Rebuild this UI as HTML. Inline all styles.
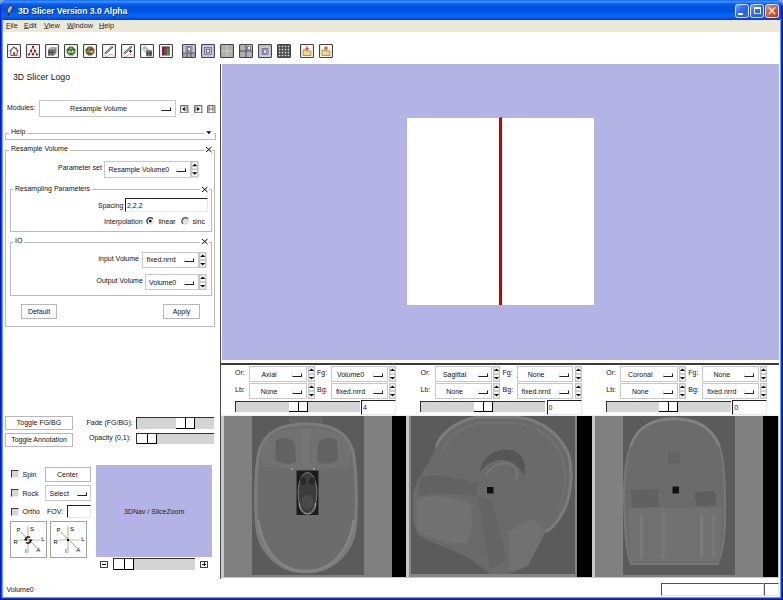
<!DOCTYPE html>
<html><head><meta charset="utf-8">
<style>
*{box-sizing:border-box;margin:0;padding:0}
html,body{width:783px;height:600px;overflow:hidden;background:#fff}
body{position:relative;font-family:"Liberation Sans",sans-serif;font-size:7px;color:#000}
.a{position:absolute}
u{text-decoration-thickness:0.9px;text-underline-offset:0.4px;text-decoration-color:#666}
.t{position:absolute;white-space:nowrap;line-height:1;color:#111}
.ind{position:absolute;width:10px;height:4px;background:#fff;border-top:1px solid #f4f4f4;border-left:1px solid #e0e0e0;border-right:1px solid #222;border-bottom:1.5px solid #222}
.tb{position:absolute;top:44px;width:14px;height:14px;border:1px solid #3a3a3a;background:#f2f2f2;border-radius:1px;overflow:hidden}
.tb svg{display:block}
</style></head><body>

<div class="a" style="left:0px;top:0px;width:6px;height:6px;background:#8aa0d8"></div>
<div class="a" style="left:777px;top:0px;width:6px;height:6px;background:#8aa0d8"></div>
<div class="a" style="left:0;top:0;width:783px;height:19.5px;border-radius:6px 6px 0 0;background:linear-gradient(#1462ec 0px,#3a90fd 1.3px,#3088fc 2.3px,#0a5cea 4px,#0053df 7px,#0052de 11px,#005cf0 13px,#0066ff 15px,#0062f8 17px,#0a48d8 18.6px,#1840b0 19.5px)"></div>
<div class="a" style="left:780px;top:5px;width:3px;height:15px;background:linear-gradient(90deg,#1050e0,#0030c0 50%,#001890)"></div>
<div class="a" style="left:0px;top:5px;width:1px;height:15px;background:#0030c8"></div>
<svg class="a" style="left:6px;top:5px" width="8" height="11" viewBox="0 0 8 11"><path d="M2.3 8.3 C0.8 7.5 0.6 4.5 2.5 2.5 C3.8 1 5.5 0.3 6.3 0.6 C6.8 2 6 5 4.5 6.8 C3.8 7.6 3 8.2 2.3 8.3 Z" fill="#c8b878" stroke="#1a1a10" stroke-width="0.7"/><path d="M2.5 8 L2.2 10.8" stroke="#101010" stroke-width="1.1"/></svg>
<div class="t" style="left:18px;top:6.8px;font-size:8.5px;font-weight:bold;color:#fff;-webkit-text-stroke:0;text-shadow:0.8px 0.8px 0 #0a2a90;transform:scaleY(1.12);transform-origin:0 100%">3D Slicer Version 3.0 Alpha</div>
<div class="a" style="left:735px;top:4px;width:14px;height:14px;border:1px solid #d8e4ff;border-radius:2.5px;background:linear-gradient(135deg,#80a8ff,#3a70f0 35%,#2a5ee8 70%,#3a6cf4)"></div>
<div class="a" style="left:750px;top:4px;width:14px;height:14px;border:1px solid #d8e4ff;border-radius:2.5px;background:linear-gradient(135deg,#80a8ff,#3a70f0 35%,#2a5ee8 70%,#3a6cf4)"></div>
<div class="a" style="left:765px;top:4px;width:14px;height:14px;border:1px solid #d8e4ff;border-radius:2.5px;background:linear-gradient(135deg,#f09070,#e06038 40%,#d04818 75%,#c03a10)"></div>
<div class="a" style="left:738px;top:13px;width:5px;height:1.6px;background:#fff"></div>
<div class="a" style="left:753.5px;top:7.4px;width:7px;height:6.2px;border:1px solid #e8f0ff;border-top:2px solid #fff"></div>
<svg class="a" style="left:765px;top:4px" width="14" height="14"><path d="M3.8 3.3L10.2 10.2M10.2 3.3L3.8 10.2" stroke="#fff" stroke-width="1.3"/></svg>
<div class="a" style="left:0px;top:19px;width:1px;height:581px;background:#0018d0"></div>
<div class="a" style="left:1px;top:19px;width:1px;height:581px;background:#0850e0"></div>
<div class="a" style="left:2px;top:19px;width:1px;height:581px;background:#6a9af4"></div>
<div class="a" style="left:780px;top:19px;width:1px;height:581px;background:#6a9af8"></div>
<div class="a" style="left:781px;top:19px;width:1px;height:581px;background:#0838d8"></div>
<div class="a" style="left:782px;top:19px;width:1px;height:581px;background:#001a90"></div>
<div class="a" style="left:2px;top:597px;width:779px;height:1px;background:#6a9af8"></div>
<div class="a" style="left:1px;top:598px;width:781px;height:1px;background:#0838d0"></div>
<div class="a" style="left:0px;top:599px;width:783px;height:1px;background:#001a88"></div>
<div class="a" style="left:3px;top:19.5px;width:777px;height:12px;background:#ece9d8"></div>
<div class="t" style="left:6px;top:21.8px;font-size:7.3px;color:#2a2a2a"><u>F</u>ile</div>
<div class="t" style="left:24px;top:21.8px;font-size:7.3px;color:#2a2a2a"><u>E</u>dit</div>
<div class="t" style="left:44px;top:21.8px;font-size:7.3px;color:#2a2a2a"><u>V</u>iew</div>
<div class="t" style="left:67px;top:21.8px;font-size:7.3px;color:#2a2a2a"><u>W</u>indow</div>
<div class="t" style="left:99px;top:21.8px;font-size:7.3px;color:#2a2a2a"><u>H</u>elp</div>
<svg class="a" style="left:7px;top:44px" width="14" height="14" viewBox="0 0 14 14"><rect x="0.5" y="0.5" width="13" height="13" rx="0.8" fill="#fafafa"/><path d="M2.6 7.2L7 3L11.4 7.2" fill="none" stroke="#555" stroke-width="1.1"/><path d="M3.8 6.2V11.4H10.2V6.2" fill="none" stroke="#444" stroke-width="0.9"/><rect x="6.1" y="8.2" width="1.9" height="3" fill="#e03a10"/><rect x="9" y="3.6" width="1" height="2" fill="#666"/><rect x="0.55" y="0.55" width="12.9" height="12.9" rx="0.8" fill="none" stroke="#444" stroke-width="1.1"/></svg>
<svg class="a" style="left:26px;top:44px" width="14" height="14" viewBox="0 0 14 14"><rect x="0.5" y="0.5" width="13" height="13" rx="0.8" fill="#fafafa"/><path d="M7 2.8L5 6.8L3 10.6M5 6.8L7 10.6M7 2.8L9 6.8L11 10.6M9 6.8L7 10.6" fill="none" stroke="#555" stroke-width="0.8"/><ellipse cx="7" cy="2.8" rx="1.25" ry="1" fill="#8a1a0a"/><ellipse cx="5" cy="6.8" rx="1.25" ry="1" fill="#8a1a0a"/><ellipse cx="9" cy="6.8" rx="1.25" ry="1" fill="#8a1a0a"/><ellipse cx="3" cy="10.6" rx="1.25" ry="1" fill="#8a1a0a"/><ellipse cx="7" cy="10.6" rx="1.25" ry="1" fill="#8a1a0a"/><ellipse cx="11" cy="10.6" rx="1.25" ry="1" fill="#8a1a0a"/><rect x="0.55" y="0.55" width="12.9" height="12.9" rx="0.8" fill="none" stroke="#444" stroke-width="1.1"/></svg>
<svg class="a" style="left:45px;top:44px" width="14" height="14" viewBox="0 0 14 14"><rect x="0.5" y="0.5" width="13" height="13" rx="0.8" fill="#fafafa"/><path d="M3 5.5L5.5 3H11.5L9 5.5Z" fill="#a8a8a8"/><path d="M9 5.5L11.5 3V9L9 11.5Z" fill="#7a7a7a"/><rect x="3" y="5.5" width="6" height="6" fill="#3a3a3a"/><rect x="3.5" y="6.0" width="0.7" height="0.7" fill="#e8e8e8"/><rect x="3.5" y="7.5" width="0.7" height="0.7" fill="#e8e8e8"/><rect x="3.5" y="9.0" width="0.7" height="0.7" fill="#e8e8e8"/><rect x="3.5" y="10.5" width="0.7" height="0.7" fill="#e8e8e8"/><rect x="5.0" y="6.0" width="0.7" height="0.7" fill="#e8e8e8"/><rect x="5.0" y="7.5" width="0.7" height="0.7" fill="#e8e8e8"/><rect x="5.0" y="9.0" width="0.7" height="0.7" fill="#e8e8e8"/><rect x="5.0" y="10.5" width="0.7" height="0.7" fill="#e8e8e8"/><rect x="6.5" y="6.0" width="0.7" height="0.7" fill="#e8e8e8"/><rect x="6.5" y="7.5" width="0.7" height="0.7" fill="#e8e8e8"/><rect x="6.5" y="9.0" width="0.7" height="0.7" fill="#e8e8e8"/><rect x="6.5" y="10.5" width="0.7" height="0.7" fill="#e8e8e8"/><rect x="8.0" y="6.0" width="0.7" height="0.7" fill="#e8e8e8"/><rect x="8.0" y="7.5" width="0.7" height="0.7" fill="#e8e8e8"/><rect x="8.0" y="9.0" width="0.7" height="0.7" fill="#e8e8e8"/><rect x="8.0" y="10.5" width="0.7" height="0.7" fill="#e8e8e8"/><rect x="0.55" y="0.55" width="12.9" height="12.9" rx="0.8" fill="none" stroke="#444" stroke-width="1.1"/></svg>
<svg class="a" style="left:64px;top:44px" width="14" height="14" viewBox="0 0 14 14"><rect x="0.5" y="0.5" width="13" height="13" rx="0.8" fill="#fafafa"/><path d="M5.2 2.6H8.8L11.4 5.2V8.8L8.8 11.4H5.2L2.6 8.8V5.2Z" fill="#4a7a3a"/><circle cx="5.6" cy="7.8" r="1.5" fill="#a8d098"/><circle cx="8.6" cy="7.6" r="1.4" fill="#b0d8a0"/><circle cx="7" cy="4.6" r="1.2" fill="#80b070"/><circle cx="7.1" cy="6.4" r="0.7" fill="#1a2a14"/><circle cx="4.4" cy="5.6" r="0.6" fill="#1a2a14"/><circle cx="9.6" cy="5.6" r="0.6" fill="#1a2a14"/><circle cx="7" cy="9.8" r="0.7" fill="#2a4a20"/><rect x="0.55" y="0.55" width="12.9" height="12.9" rx="0.8" fill="none" stroke="#444" stroke-width="1.1"/></svg>
<svg class="a" style="left:83px;top:44px" width="14" height="14" viewBox="0 0 14 14"><rect x="0.5" y="0.5" width="13" height="13" rx="0.8" fill="#fafafa"/><path d="M5.2 2.6H8.8L11.4 5.2V8.8L8.8 11.4H5.2L2.6 8.8V5.2Z" fill="#4a7a3a"/><circle cx="5.6" cy="7.8" r="1.5" fill="#a8d098"/><circle cx="8.6" cy="7.6" r="1.4" fill="#b0d8a0"/><circle cx="7" cy="4.6" r="1.2" fill="#80b070"/><circle cx="7.1" cy="6.4" r="0.7" fill="#1a2a14"/><circle cx="4.4" cy="5.6" r="0.6" fill="#1a2a14"/><circle cx="9.6" cy="5.6" r="0.6" fill="#1a2a14"/><circle cx="7" cy="9.8" r="0.7" fill="#2a4a20"/><circle cx="8.4" cy="5" r="1.4" fill="#f01010"/><circle cx="5.4" cy="9" r="1.4" fill="#f01010"/><rect x="0.55" y="0.55" width="12.9" height="12.9" rx="0.8" fill="none" stroke="#444" stroke-width="1.1"/></svg>
<svg class="a" style="left:102px;top:44px" width="14" height="14" viewBox="0 0 14 14"><rect x="0.5" y="0.5" width="13" height="13" rx="0.8" fill="#fafafa"/><path d="M3 9.8L10.8 2.6" stroke="#505050" stroke-width="2"/><path d="M3.2 9.6L10.6 2.8" stroke="#e0e0e0" stroke-width="0.7"/><path d="M2.4 11.4C3.8 13 5.4 12.6 6.8 11.2C8 10 9.6 9.8 11.6 11.4" fill="none" stroke="#f07890" stroke-width="0.8"/><rect x="0.55" y="0.55" width="12.9" height="12.9" rx="0.8" fill="none" stroke="#444" stroke-width="1.1"/></svg>
<svg class="a" style="left:121px;top:44px" width="14" height="14" viewBox="0 0 14 14"><rect x="0.5" y="0.5" width="13" height="13" rx="0.8" fill="#fafafa"/><path d="M3 9.8L10.8 2.6" stroke="#505050" stroke-width="2"/><path d="M3.2 9.6L10.6 2.8" stroke="#e0e0e0" stroke-width="0.7"/><path d="M2.4 11.4C3.8 13 5.4 12.6 6.8 11.2C8 10 9.6 9.8 11.6 11.4" fill="none" stroke="#f07890" stroke-width="0.8"/><path d="M9.6 5.8V8.8M8.1 7.3H11.1" stroke="#222" stroke-width="1"/><rect x="0.55" y="0.55" width="12.9" height="12.9" rx="0.8" fill="none" stroke="#444" stroke-width="1.1"/></svg>
<svg class="a" style="left:140px;top:44px" width="14" height="14" viewBox="0 0 14 14"><rect x="0.5" y="0.5" width="13" height="13" rx="0.8" fill="#fafafa"/><path d="M2.2 4.6L4.8 2L11 8.2L8.4 10.8Z" fill="#e4e4e4" stroke="#606060" stroke-width="0.5"/><rect x="4.4" y="4.2" width="0.6" height="0.6" fill="#555"/><rect x="4.4" y="2.9000000000000004" width="0.6" height="0.6" fill="#555"/><rect x="5.7" y="5.5" width="0.6" height="0.6" fill="#555"/><rect x="5.7" y="4.2" width="0.6" height="0.6" fill="#555"/><rect x="7.0" y="6.800000000000001" width="0.6" height="0.6" fill="#555"/><rect x="7.0" y="5.500000000000001" width="0.6" height="0.6" fill="#555"/><rect x="8.3" y="8.100000000000001" width="0.6" height="0.6" fill="#555"/><rect x="8.3" y="6.800000000000002" width="0.6" height="0.6" fill="#555"/><rect x="6.2" y="6.6" width="5.8" height="5.6" fill="#2a2a2a"/><rect x="6.7" y="7.1" width="0.7" height="0.7" fill="#f0f0f0"/><rect x="6.7" y="8.5" width="0.7" height="0.7" fill="#f0f0f0"/><rect x="6.7" y="9.899999999999999" width="0.7" height="0.7" fill="#f0f0f0"/><rect x="6.7" y="11.299999999999999" width="0.7" height="0.7" fill="#f0f0f0"/><rect x="8.1" y="7.1" width="0.7" height="0.7" fill="#f0f0f0"/><rect x="8.1" y="8.5" width="0.7" height="0.7" fill="#f0f0f0"/><rect x="8.1" y="9.899999999999999" width="0.7" height="0.7" fill="#f0f0f0"/><rect x="8.1" y="11.299999999999999" width="0.7" height="0.7" fill="#f0f0f0"/><rect x="9.5" y="7.1" width="0.7" height="0.7" fill="#f0f0f0"/><rect x="9.5" y="8.5" width="0.7" height="0.7" fill="#f0f0f0"/><rect x="9.5" y="9.899999999999999" width="0.7" height="0.7" fill="#f0f0f0"/><rect x="9.5" y="11.299999999999999" width="0.7" height="0.7" fill="#f0f0f0"/><rect x="10.899999999999999" y="7.1" width="0.7" height="0.7" fill="#f0f0f0"/><rect x="10.899999999999999" y="8.5" width="0.7" height="0.7" fill="#f0f0f0"/><rect x="10.899999999999999" y="9.899999999999999" width="0.7" height="0.7" fill="#f0f0f0"/><rect x="10.899999999999999" y="11.299999999999999" width="0.7" height="0.7" fill="#f0f0f0"/><rect x="0.55" y="0.55" width="12.9" height="12.9" rx="0.8" fill="none" stroke="#444" stroke-width="1.1"/></svg>
<svg class="a" style="left:159px;top:44px" width="14" height="14" viewBox="0 0 14 14"><rect x="0.5" y="0.5" width="13" height="13" rx="0.8" fill="#fafafa"/><rect x="3" y="2.6" width="8" height="8.8" fill="#2a2a2a"/><rect x="3.3" y="2.8" width="1.2" height="8.4" fill="#b81828"/><rect x="4.85" y="2.8" width="1.2" height="8.4" fill="#8a2aa0"/><rect x="6.4" y="2.8" width="1.2" height="8.4" fill="#28a848"/><rect x="7.95" y="2.8" width="1.2" height="8.4" fill="#28a0a8"/><rect x="9.5" y="2.8" width="1.2" height="8.4" fill="#a8a828"/><rect x="3.3" y="2.8" width="7.6" height="1.6" fill="#c01010" opacity="0.6"/><rect x="0.55" y="0.55" width="12.9" height="12.9" rx="0.8" fill="none" stroke="#444" stroke-width="1.1"/></svg>
<svg class="a" style="left:182px;top:44px" width="14" height="14" viewBox="0 0 14 14"><rect x="0.5" y="0.5" width="13" height="13" rx="0.8" fill="#fafafa"/><rect x="1" y="1" width="12" height="8" fill="#c8c8f0"/><rect x="4" y="2.5" width="6" height="5.5" fill="#b8b8e0" stroke="#555" stroke-width="0.6"/><rect x="5.5" y="3.8" width="3" height="3" fill="#fff" stroke="#444" stroke-width="0.6"/><rect x="1" y="9" width="12" height="4" fill="#a8a8a8"/><path d="M1 9H13M5 9V13M9 9V13" stroke="#333" stroke-width="0.7"/><rect x="0.55" y="0.55" width="12.9" height="12.9" rx="0.8" fill="none" stroke="#444" stroke-width="1.1"/></svg>
<svg class="a" style="left:201px;top:44px" width="14" height="14" viewBox="0 0 14 14"><rect x="0.5" y="0.5" width="13" height="13" rx="0.8" fill="#fafafa"/><rect x="1" y="1" width="12" height="12" fill="#c8c8f0"/><rect x="3.5" y="3.5" width="7" height="7" fill="#b8b8e0" stroke="#555" stroke-width="0.6"/><rect x="5.3" y="5.3" width="3.4" height="3.4" fill="#fff" stroke="#444" stroke-width="0.6"/><rect x="0.55" y="0.55" width="12.9" height="12.9" rx="0.8" fill="none" stroke="#444" stroke-width="1.1"/></svg>
<svg class="a" style="left:220px;top:44px" width="14" height="14" viewBox="0 0 14 14"><rect x="0.5" y="0.5" width="13" height="13" rx="0.8" fill="#fafafa"/><rect x="1" y="1" width="12" height="12" fill="#b0b0b0"/><path d="M7 1V13M1 7H13" stroke="#d8d8c8" stroke-width="0.8"/><rect x="0.55" y="0.55" width="12.9" height="12.9" rx="0.8" fill="none" stroke="#444" stroke-width="1.1"/></svg>
<svg class="a" style="left:239px;top:44px" width="14" height="14" viewBox="0 0 14 14"><rect x="0.5" y="0.5" width="13" height="13" rx="0.8" fill="#fafafa"/><rect x="1" y="1" width="12" height="12" fill="#b0b0b0"/><rect x="7" y="1" width="6" height="6" fill="#c8c8f0"/><rect x="8.3" y="2.3" width="3.4" height="3.4" fill="#fff" stroke="#444" stroke-width="0.6"/><path d="M7 1V13M1 7H13" stroke="#333" stroke-width="0.8"/><rect x="0.55" y="0.55" width="12.9" height="12.9" rx="0.8" fill="none" stroke="#444" stroke-width="1.1"/></svg>
<svg class="a" style="left:258px;top:44px" width="14" height="14" viewBox="0 0 14 14"><rect x="0.5" y="0.5" width="13" height="13" rx="0.8" fill="#fafafa"/><rect x="1" y="1" width="12" height="12" fill="#c8c8f0"/><rect x="1" y="1" width="12" height="2" fill="#c0c0b0"/><rect x="4" y="4.5" width="6" height="6" fill="#b8b8e0" stroke="#555" stroke-width="0.6"/><rect x="5.5" y="6" width="3" height="3" fill="#fff" stroke="#444" stroke-width="0.6"/><rect x="0.55" y="0.55" width="12.9" height="12.9" rx="0.8" fill="none" stroke="#444" stroke-width="1.1"/></svg>
<svg class="a" style="left:277px;top:44px" width="14" height="14" viewBox="0 0 14 14"><rect x="0.5" y="0.5" width="13" height="13" rx="0.8" fill="#fafafa"/><rect x="1" y="1" width="12" height="12" fill="#333"/><rect x="1.6" y="1.6" width="1.8" height="1.8" fill="#ddd"/><rect x="1.6" y="4.6" width="1.8" height="1.8" fill="#ddd"/><rect x="1.6" y="7.6" width="1.8" height="1.8" fill="#ddd"/><rect x="1.6" y="10.6" width="1.8" height="1.8" fill="#ddd"/><rect x="4.6" y="1.6" width="1.8" height="1.8" fill="#ddd"/><rect x="4.6" y="4.6" width="1.8" height="1.8" fill="#ddd"/><rect x="4.6" y="7.6" width="1.8" height="1.8" fill="#ddd"/><rect x="4.6" y="10.6" width="1.8" height="1.8" fill="#ddd"/><rect x="7.6" y="1.6" width="1.8" height="1.8" fill="#ddd"/><rect x="7.6" y="4.6" width="1.8" height="1.8" fill="#ddd"/><rect x="7.6" y="7.6" width="1.8" height="1.8" fill="#ddd"/><rect x="7.6" y="10.6" width="1.8" height="1.8" fill="#ddd"/><rect x="10.6" y="1.6" width="1.8" height="1.8" fill="#ddd"/><rect x="10.6" y="4.6" width="1.8" height="1.8" fill="#ddd"/><rect x="10.6" y="7.6" width="1.8" height="1.8" fill="#ddd"/><rect x="10.6" y="10.6" width="1.8" height="1.8" fill="#ddd"/><rect x="0.55" y="0.55" width="12.9" height="12.9" rx="0.8" fill="none" stroke="#444" stroke-width="1.1"/></svg>
<svg class="a" style="left:300px;top:44px" width="14" height="14" viewBox="0 0 14 14"><rect x="0.5" y="0.5" width="13" height="13" rx="0.8" fill="#fafafa"/><path d="M3 6H6L7 7H11V11.5H3Z" fill="#f0d890" stroke="#806020" stroke-width="0.6"/><path d="M7 2V6M5.3 4.3L7 6L8.7 4.3" stroke="#f06010" stroke-width="1.3" fill="none"/><rect x="0.55" y="0.55" width="12.9" height="12.9" rx="0.8" fill="none" stroke="#444" stroke-width="1.1"/></svg>
<svg class="a" style="left:319px;top:44px" width="14" height="14" viewBox="0 0 14 14"><rect x="0.5" y="0.5" width="13" height="13" rx="0.8" fill="#fafafa"/><path d="M3 6H6L7 7H11V11.5H3Z" fill="#f0d890" stroke="#806020" stroke-width="0.6"/><path d="M7 7V2.8M5.3 4.5L7 2.8L8.7 4.5" stroke="#f06010" stroke-width="1.3" fill="none"/><rect x="0.55" y="0.55" width="12.9" height="12.9" rx="0.8" fill="none" stroke="#444" stroke-width="1.1"/></svg>
<div class="a" style="left:220px;top:64px;width:1px;height:515px;background:#484848"></div>
<div class="a" style="left:222px;top:64px;width:557px;height:296px;background:#b3b3e6"></div>
<div class="a" style="left:221px;top:363px;width:558px;height:1.5px;background:#3c3c3c"></div>
<div class="a" style="left:407px;top:118px;width:187px;height:187px;background:#fff"></div>
<div class="a" style="left:499px;top:118px;width:3px;height:187px;background:linear-gradient(90deg,#8a1010,#d40000 35%,#d40000 65%,#8a1010)"></div>
<div class="a" style="left:499.5px;top:117px;width:2px;height:1px;background:#405070"></div>
<div class="a" style="left:221px;top:415px;width:558px;height:163px;background:#c8c8c8;border-top:1px solid #f0f0f0"></div>
<div class="a" style="left:224px;top:416px;width:168px;height:161px;background:#808080"></div>
<svg class="a" style="left:252px;top:416px" width="112" height="159" viewBox="252 416 112 159">
<rect x="252" y="416" width="112" height="159" fill="#5b5b5b"/>
<path d="M290 416 L322 416 L324 430 L288 430 Z" fill="#646464"/>
<path d="M306 424 C280 424 264 432 259 452 C255 472 255 510 257 528 C259 548 276 572 306 572 C336 572 353 548 355 528 C357 510 357 472 353 452 C348 432 332 424 306 424 Z" fill="#6c6c6c" stroke="#7c7c7c" stroke-width="3.2"/>
<path d="M262 446 C270 432 286 428 306 428 C326 428 342 432 350 446 L350 466 C330 470 282 470 262 466 Z" fill="#717171"/>
<path d="M276 440 C282 436 292 438 295 444 L296 462 C290 465 280 464 275 460 Z" fill="#626262"/>
<path d="M337 440 C331 436 321 438 318 444 L317 462 C323 465 333 464 338 460 Z" fill="#626262"/>
<path d="M302 428 L311 428 L310 466 L303 466 Z" fill="#767676"/>
<rect x="291" y="468" width="2" height="2" fill="#999"/><rect x="313" y="468" width="2" height="2" fill="#9a9a9a"/>
<path d="M258 520 C262 548 278 571 306 571 C334 571 350 548 354 520" fill="none" stroke="#858585" stroke-width="2.6"/>
<rect x="296.5" y="470.5" width="22" height="44.5" fill="#1c1c1c"/>
<ellipse cx="307.5" cy="493" rx="9.5" ry="20.5" fill="#3c3c3c" stroke="#8a8a8a" stroke-width="0.8"/>
<path d="M299 503 C300 512 304 514 307.5 514 C311 514 315 512 316 503" fill="none" stroke="#b0b0b0" stroke-width="0.9"/>
<ellipse cx="303" cy="481" rx="3" ry="4" fill="#2a2a2a"/><ellipse cx="312" cy="481" rx="3" ry="4" fill="#2a2a2a"/>
<ellipse cx="307.5" cy="502" rx="6" ry="7" fill="#4a4a4a"/>
</svg>
<div class="a" style="left:392px;top:416px;width:14px;height:161px;background:#000"></div>
<div class="a" style="left:408.5px;top:416px;width:168.5px;height:161px;background:#858585"></div>
<svg class="a" style="left:411px;top:416px" width="164" height="158" viewBox="411 416 164 158">
<rect x="411" y="416" width="164" height="158" fill="#5b5b5b"/>
<path d="M436 447 C440 436 452 422 477 417 L517 417 C540 420 558 432 568 453 C573 470 572 495 563 512 C556 524 550 530 546 531 C541 540 538 547 536 550 C531 560 526 566 522 569 L509 574 L490 574 C480 566 470 558 463 555 C448 548 430 542 420 536 C414 530 413 522 413 517 L413 496 C414 488 417 480 420 477 C423 470 426 466 428 464 Z" fill="#6a6a6a"/>
<path d="M436 447 C440 436 452 422 477 417 L517 417 C540 420 558 432 568 453 C573 470 572 495 563 512 C556 524 550 530 546 531" fill="none" stroke="#7c7c7c" stroke-width="3"/>
<path d="M442 452 C447 440 458 428 479 423 L516 423 C537 426 553 437 562 456 C567 472 566 494 558 510" fill="none" stroke="#737373" stroke-width="1.4"/>
<path d="M480 472 C482 456 496 448 510 450 C522 452 527 462 524 476 C520 466 510 458 498 460 C490 462 484 466 480 472 Z" fill="#565656"/><path d="M486 476 C490 466 500 462 510 464 C516 466 518 472 516 480" fill="none" stroke="#7a7a7a" stroke-width="1.5"/>
<path d="M420 478 C435 474 455 476 478 484 L476 496 C455 494 435 492 418 496 Z" fill="#626262"/>
<path d="M416 500 C428 494 456 496 470 504 C474 518 472 536 466 544 C448 544 428 538 417 530 Z" fill="#717171"/>
<path d="M478 496 L492 500 L506 560 L490 570 Z" fill="#646464"/>
<path d="M508 532 L532 518 L546 531 L528 566 L510 571 Z" fill="#717171"/>
<rect x="487" y="487" width="6.5" height="6.5" fill="#111"/>
</svg>
<div class="a" style="left:577px;top:416px;width:15px;height:161px;background:#000"></div>
<div class="a" style="left:595px;top:416px;width:168px;height:161px;background:#808080"></div>
<svg class="a" style="left:623px;top:416px" width="112" height="159" viewBox="623 416 112 159">
<rect x="623" y="416" width="112" height="159" fill="#5b5b5b"/>
<path d="M674 418 C652 418 637 428 631 444 C626 458 624 475 624 500 L625 525 C626 545 628 556 631 564 L718 564 C721 556 724 545 725 525 L725 500 C725 475 724 458 719 444 C712 428 697 418 674 418 Z" fill="#6b6b6b" stroke="#777" stroke-width="2"/>
<path d="M631 446 C636 428 652 419 674 419 C697 419 712 428 719 446" fill="none" stroke="#828282" stroke-width="2.5"/>
<path d="M628 508 L722 508 L720 562 L631 562 Z" fill="#717171"/>
<rect x="640" y="515" width="3" height="44" fill="#7a7a7a"/><rect x="662" y="512" width="3" height="46" fill="#777"/><rect x="700" y="514" width="3" height="44" fill="#7b7b7b"/><rect x="712" y="516" width="2.5" height="40" fill="#787878"/>
<path d="M631 490 L658 489 L659 507 L632 508 Z" fill="#616161"/>
<path d="M695 492 L715 491 L716 505 L696 506 Z" fill="#5e5e5e"/>
<rect x="668" y="452" width="12" height="11" fill="#646464"/>
<rect x="672.5" y="486.5" width="6.5" height="7" fill="#111"/>
</svg>
<div class="a" style="left:763px;top:416px;width:15px;height:161px;background:#000"></div>
<div class="t" style="left:235px;top:369px;font-size:7px;">Or:</div>
<div class="a" style="left:249px;top:366px;width:57.5px;height:16px;border:1.4px solid #c8c8c8;background:#fff"></div>
<div class="ind" style="left:292px;top:372.8px"></div>
<div class="t" style="left:249px;top:371px;width:40px;text-align:center;font-size:7px;">Axial</div>
<svg class="a" style="left:307.5px;top:366px" width="7" height="16" viewBox="0 0 7 16"><rect x="0.7" y="0.7" width="5.6" height="14.6" fill="#fff" stroke="#c4c4c4" stroke-width="1.4"/><rect x="0" y="7.2" width="7" height="1.6" fill="#c4c4c4"/><path d="M0.8999999999999999 5.0L6.1 5.0L3.5 2.4000000000000004Z" fill="#000"/><path d="M0.8999999999999999 11.0L6.1 11.0L3.5 13.6Z" fill="#000"/></svg>
<div class="t" style="left:235px;top:386px;font-size:7px;">Lb:</div>
<div class="a" style="left:249px;top:383px;width:57.5px;height:16px;border:1.4px solid #c8c8c8;background:#fff"></div>
<div class="ind" style="left:292px;top:389.8px"></div>
<div class="t" style="left:249px;top:388px;width:40px;text-align:center;font-size:7px;">None</div>
<svg class="a" style="left:307.5px;top:383px" width="7" height="16" viewBox="0 0 7 16"><rect x="0.7" y="0.7" width="5.6" height="14.6" fill="#fff" stroke="#c4c4c4" stroke-width="1.4"/><rect x="0" y="7.2" width="7" height="1.6" fill="#c4c4c4"/><path d="M0.8999999999999999 5.0L6.1 5.0L3.5 2.4000000000000004Z" fill="#000"/><path d="M0.8999999999999999 11.0L6.1 11.0L3.5 13.6Z" fill="#000"/></svg>
<div class="t" style="left:317px;top:369px;font-size:7px;">Fg:</div>
<div class="a" style="left:331px;top:366px;width:56.5px;height:16px;border:1.4px solid #c8c8c8;background:#fff"></div>
<div class="ind" style="left:373px;top:372.8px"></div>
<div class="t" style="left:331px;top:371px;width:39px;text-align:center;font-size:7px;">Volume0</div>
<svg class="a" style="left:389px;top:366px" width="7" height="16" viewBox="0 0 7 16"><rect x="0.7" y="0.7" width="5.6" height="14.6" fill="#fff" stroke="#c4c4c4" stroke-width="1.4"/><rect x="0" y="7.2" width="7" height="1.6" fill="#c4c4c4"/><path d="M0.8999999999999999 5.0L6.1 5.0L3.5 2.4000000000000004Z" fill="#000"/><path d="M0.8999999999999999 11.0L6.1 11.0L3.5 13.6Z" fill="#000"/></svg>
<div class="t" style="left:317px;top:386px;font-size:7px;">Bg:</div>
<div class="a" style="left:331px;top:383px;width:56.5px;height:16px;border:1.4px solid #c8c8c8;background:#fff"></div>
<div class="ind" style="left:373px;top:389.8px"></div>
<div class="t" style="left:331px;top:388px;width:39px;text-align:center;font-size:7px;">fixed.nrrd</div>
<svg class="a" style="left:389px;top:383px" width="7" height="16" viewBox="0 0 7 16"><rect x="0.7" y="0.7" width="5.6" height="14.6" fill="#fff" stroke="#c4c4c4" stroke-width="1.4"/><rect x="0" y="7.2" width="7" height="1.6" fill="#c4c4c4"/><path d="M0.8999999999999999 5.0L6.1 5.0L3.5 2.4000000000000004Z" fill="#000"/><path d="M0.8999999999999999 11.0L6.1 11.0L3.5 13.6Z" fill="#000"/></svg>
<div class="a" style="left:234.5px;top:401px;width:125px;height:11px;background:#d4d4d4;border-top:1px solid #303030;border-left:1px solid #303030"></div>
<div class="a" style="left:289px;top:402px;width:19px;height:10px;background:#fff;border-right:1px solid #000;border-bottom:1px solid #000"></div>
<div class="a" style="left:298px;top:402px;width:1px;height:9px;background:#000"></div>
<div class="a" style="left:361px;top:400px;width:35px;height:15px;background:#fff;border-top:1px solid #202020;border-left:1px solid #202020;border-right:1px solid #e8e8e8;border-bottom:1px solid #e8e8e8"></div>
<div class="t" style="left:363px;top:404px;font-size:7px;">4</div>
<div class="t" style="left:420.6px;top:369px;font-size:7px;">Or:</div>
<div class="a" style="left:434.6px;top:366px;width:57.5px;height:16px;border:1.4px solid #c8c8c8;background:#fff"></div>
<div class="ind" style="left:477.6px;top:372.8px"></div>
<div class="t" style="left:434.6px;top:371px;width:40.0px;text-align:center;font-size:7px;">Sagittal</div>
<svg class="a" style="left:493.1px;top:366px" width="7" height="16" viewBox="0 0 7 16"><rect x="0.7" y="0.7" width="5.6" height="14.6" fill="#fff" stroke="#c4c4c4" stroke-width="1.4"/><rect x="0" y="7.2" width="7" height="1.6" fill="#c4c4c4"/><path d="M0.8999999999999999 5.0L6.1 5.0L3.5 2.4000000000000004Z" fill="#000"/><path d="M0.8999999999999999 11.0L6.1 11.0L3.5 13.6Z" fill="#000"/></svg>
<div class="t" style="left:420.6px;top:386px;font-size:7px;">Lb:</div>
<div class="a" style="left:434.6px;top:383px;width:57.5px;height:16px;border:1.4px solid #c8c8c8;background:#fff"></div>
<div class="ind" style="left:477.6px;top:389.8px"></div>
<div class="t" style="left:434.6px;top:388px;width:40.0px;text-align:center;font-size:7px;">None</div>
<svg class="a" style="left:493.1px;top:383px" width="7" height="16" viewBox="0 0 7 16"><rect x="0.7" y="0.7" width="5.6" height="14.6" fill="#fff" stroke="#c4c4c4" stroke-width="1.4"/><rect x="0" y="7.2" width="7" height="1.6" fill="#c4c4c4"/><path d="M0.8999999999999999 5.0L6.1 5.0L3.5 2.4000000000000004Z" fill="#000"/><path d="M0.8999999999999999 11.0L6.1 11.0L3.5 13.6Z" fill="#000"/></svg>
<div class="t" style="left:502.6px;top:369px;font-size:7px;">Fg:</div>
<div class="a" style="left:516.6px;top:366px;width:56.5px;height:16px;border:1.4px solid #c8c8c8;background:#fff"></div>
<div class="ind" style="left:558.6px;top:372.8px"></div>
<div class="t" style="left:516.6px;top:371px;width:39.0px;text-align:center;font-size:7px;">None</div>
<svg class="a" style="left:574.6px;top:366px" width="7" height="16" viewBox="0 0 7 16"><rect x="0.7" y="0.7" width="5.6" height="14.6" fill="#fff" stroke="#c4c4c4" stroke-width="1.4"/><rect x="0" y="7.2" width="7" height="1.6" fill="#c4c4c4"/><path d="M0.8999999999999999 5.0L6.1 5.0L3.5 2.4000000000000004Z" fill="#000"/><path d="M0.8999999999999999 11.0L6.1 11.0L3.5 13.6Z" fill="#000"/></svg>
<div class="t" style="left:502.6px;top:386px;font-size:7px;">Bg:</div>
<div class="a" style="left:516.6px;top:383px;width:56.5px;height:16px;border:1.4px solid #c8c8c8;background:#fff"></div>
<div class="ind" style="left:558.6px;top:389.8px"></div>
<div class="t" style="left:516.6px;top:388px;width:39.0px;text-align:center;font-size:7px;">fixed.nrrd</div>
<svg class="a" style="left:574.6px;top:383px" width="7" height="16" viewBox="0 0 7 16"><rect x="0.7" y="0.7" width="5.6" height="14.6" fill="#fff" stroke="#c4c4c4" stroke-width="1.4"/><rect x="0" y="7.2" width="7" height="1.6" fill="#c4c4c4"/><path d="M0.8999999999999999 5.0L6.1 5.0L3.5 2.4000000000000004Z" fill="#000"/><path d="M0.8999999999999999 11.0L6.1 11.0L3.5 13.6Z" fill="#000"/></svg>
<div class="a" style="left:420.1px;top:401px;width:125px;height:11px;background:#d4d4d4;border-top:1px solid #303030;border-left:1px solid #303030"></div>
<div class="a" style="left:473.6px;top:402px;width:19px;height:10px;background:#fff;border-right:1px solid #000;border-bottom:1px solid #000"></div>
<div class="a" style="left:482.6px;top:402px;width:1px;height:9px;background:#000"></div>
<div class="a" style="left:546.6px;top:400px;width:35px;height:15px;background:#fff;border-top:1px solid #202020;border-left:1px solid #202020;border-right:1px solid #e8e8e8;border-bottom:1px solid #e8e8e8"></div>
<div class="t" style="left:548.6px;top:404px;font-size:7px;">0</div>
<div class="t" style="left:606.3px;top:369px;font-size:7px;">Or:</div>
<div class="a" style="left:620.3px;top:366px;width:57.5px;height:16px;border:1.4px solid #c8c8c8;background:#fff"></div>
<div class="ind" style="left:663.3px;top:372.8px"></div>
<div class="t" style="left:620.3px;top:371px;width:40.0px;text-align:center;font-size:7px;">Coronal</div>
<svg class="a" style="left:678.8px;top:366px" width="7" height="16" viewBox="0 0 7 16"><rect x="0.7" y="0.7" width="5.6" height="14.6" fill="#fff" stroke="#c4c4c4" stroke-width="1.4"/><rect x="0" y="7.2" width="7" height="1.6" fill="#c4c4c4"/><path d="M0.8999999999999999 5.0L6.1 5.0L3.5 2.4000000000000004Z" fill="#000"/><path d="M0.8999999999999999 11.0L6.1 11.0L3.5 13.6Z" fill="#000"/></svg>
<div class="t" style="left:606.3px;top:386px;font-size:7px;">Lb:</div>
<div class="a" style="left:620.3px;top:383px;width:57.5px;height:16px;border:1.4px solid #c8c8c8;background:#fff"></div>
<div class="ind" style="left:663.3px;top:389.8px"></div>
<div class="t" style="left:620.3px;top:388px;width:40.0px;text-align:center;font-size:7px;">None</div>
<svg class="a" style="left:678.8px;top:383px" width="7" height="16" viewBox="0 0 7 16"><rect x="0.7" y="0.7" width="5.6" height="14.6" fill="#fff" stroke="#c4c4c4" stroke-width="1.4"/><rect x="0" y="7.2" width="7" height="1.6" fill="#c4c4c4"/><path d="M0.8999999999999999 5.0L6.1 5.0L3.5 2.4000000000000004Z" fill="#000"/><path d="M0.8999999999999999 11.0L6.1 11.0L3.5 13.6Z" fill="#000"/></svg>
<div class="t" style="left:688.3px;top:369px;font-size:7px;">Fg:</div>
<div class="a" style="left:702.3px;top:366px;width:56.5px;height:16px;border:1.4px solid #c8c8c8;background:#fff"></div>
<div class="ind" style="left:744.3px;top:372.8px"></div>
<div class="t" style="left:702.3px;top:371px;width:39.0px;text-align:center;font-size:7px;">None</div>
<svg class="a" style="left:760.3px;top:366px" width="7" height="16" viewBox="0 0 7 16"><rect x="0.7" y="0.7" width="5.6" height="14.6" fill="#fff" stroke="#c4c4c4" stroke-width="1.4"/><rect x="0" y="7.2" width="7" height="1.6" fill="#c4c4c4"/><path d="M0.8999999999999999 5.0L6.1 5.0L3.5 2.4000000000000004Z" fill="#000"/><path d="M0.8999999999999999 11.0L6.1 11.0L3.5 13.6Z" fill="#000"/></svg>
<div class="t" style="left:688.3px;top:386px;font-size:7px;">Bg:</div>
<div class="a" style="left:702.3px;top:383px;width:56.5px;height:16px;border:1.4px solid #c8c8c8;background:#fff"></div>
<div class="ind" style="left:744.3px;top:389.8px"></div>
<div class="t" style="left:702.3px;top:388px;width:39.0px;text-align:center;font-size:7px;">fixed.nrrd</div>
<svg class="a" style="left:760.3px;top:383px" width="7" height="16" viewBox="0 0 7 16"><rect x="0.7" y="0.7" width="5.6" height="14.6" fill="#fff" stroke="#c4c4c4" stroke-width="1.4"/><rect x="0" y="7.2" width="7" height="1.6" fill="#c4c4c4"/><path d="M0.8999999999999999 5.0L6.1 5.0L3.5 2.4000000000000004Z" fill="#000"/><path d="M0.8999999999999999 11.0L6.1 11.0L3.5 13.6Z" fill="#000"/></svg>
<div class="a" style="left:605.8px;top:401px;width:125px;height:11px;background:#d4d4d4;border-top:1px solid #303030;border-left:1px solid #303030"></div>
<div class="a" style="left:659.3px;top:402px;width:19px;height:10px;background:#fff;border-right:1px solid #000;border-bottom:1px solid #000"></div>
<div class="a" style="left:668.3px;top:402px;width:1px;height:9px;background:#000"></div>
<div class="a" style="left:732.3px;top:400px;width:35px;height:15px;background:#fff;border-top:1px solid #202020;border-left:1px solid #202020;border-right:1px solid #e8e8e8;border-bottom:1px solid #e8e8e8"></div>
<div class="t" style="left:734.3px;top:404px;font-size:7px;">0</div>
<div class="t" style="left:13px;top:73px;font-size:8.7px;">3D Slicer Logo</div>
<div class="t" style="left:7px;top:104px;font-size:7px;">Modules:</div>
<div class="a" style="left:39px;top:100px;width:137px;height:17px;border:1.4px solid #c8c8c8;background:#fff"></div>
<div class="ind" style="left:161px;top:107.3px"></div>
<div class="t" style="left:39px;top:105px;width:119px;text-align:center;font-size:7px;">Resample Volume</div>
<svg class="a" style="left:180px;top:104.8px" width="8.5" height="8.5" viewBox="0 0 8.5 8.5"><rect x="0.6" y="0.6" width="7.3" height="7.3" rx="0.7" fill="#fff" stroke="#6a6a6a" stroke-width="1.1"/><path d="M2.2 4L4.8 1.8V6.2Z" fill="#000"/><rect x="5.6" y="1.6" width="1.1" height="4.8" fill="#777"/></svg>
<svg class="a" style="left:194px;top:104.8px" width="8.5" height="8.5" viewBox="0 0 8.5 8.5"><rect x="0.6" y="0.6" width="7.3" height="7.3" rx="0.7" fill="#fff" stroke="#6a6a6a" stroke-width="1.1"/><path d="M5.8 4L3.2 1.8V6.2Z" fill="#000"/><rect x="1.3" y="1.6" width="1.1" height="4.8" fill="#777"/></svg>
<svg class="a" style="left:207px;top:104.8px" width="8.5" height="8.5" viewBox="0 0 8.5 8.5"><rect x="0.6" y="0.6" width="7.3" height="7.3" rx="0.7" fill="#fff" stroke="#6a6a6a" stroke-width="1.1"/><rect x="1.5" y="1.5" width="1.2" height="5" fill="#666"/><rect x="5.3" y="1.5" width="1.2" height="5" fill="#666"/><rect x="2.7" y="3.5" width="2.6" height="1" fill="#666"/></svg>
<div class="a" style="left:5px;top:132.5px;width:210.5px;height:7.3px;border:1.3px solid #bcbcbc"></div>
<div class="t" style="left:9px;top:128px;font-size:7px;background:#fff;padding:0 2px">Help</div>
<div class="a" style="left:203.5px;top:130.5px;width:10.5px;height:5px;background:#fff"></div>
<svg class="a" style="left:206.0px;top:131.0px" width="6" height="4"><path d="M0.3 0.3H5.3L2.8 3.2Z" fill="#000"/></svg>
<div class="a" style="left:5px;top:149.5px;width:209.5px;height:177px;border:1.3px solid #bcbcbc"></div>
<div class="t" style="left:9px;top:145px;font-size:7px;background:#fff;padding:0 2px">Resample Volume</div>
<div class="a" style="left:203.7px;top:147.5px;width:8.300000000000011px;height:4px;background:#fff"></div>
<svg class="a" style="left:204.7px;top:146.0px" width="8" height="7"><path d="M1 1L6.5 6M6.5 1L1 6" stroke="#000" stroke-width="1"/></svg>
<div class="t" style="left:58px;top:164px;font-size:7px;">Parameter set</div>
<div class="a" style="left:103.5px;top:161px;width:87px;height:17px;border:1.4px solid #c8c8c8;background:#fff"></div>
<div class="ind" style="left:175.5px;top:168.3px"></div>
<div class="t" style="left:108.5px;top:166px;font-size:7px;">Resample Volume0</div>
<svg class="a" style="left:191px;top:161px" width="7.5" height="16.5" viewBox="0 0 7.5 16.5"><rect x="0.7" y="0.7" width="6.1" height="15.1" fill="#fff" stroke="#c4c4c4" stroke-width="1.4"/><rect x="0" y="7.45" width="7.5" height="1.6" fill="#c4c4c4"/><path d="M1.15 5.25L6.35 5.25L3.75 2.6500000000000004Z" fill="#000"/><path d="M1.15 11.25L6.35 11.25L3.75 13.85Z" fill="#000"/></svg>
<div class="a" style="left:9.5px;top:189px;width:202px;height:43px;border:1.3px solid #bcbcbc"></div>
<div class="t" style="left:13px;top:185px;font-size:7px;background:#fff;padding:0 2px">Resampling Parameters</div>
<div class="a" style="left:200px;top:187px;width:9.0px;height:4px;background:#fff"></div>
<svg class="a" style="left:201px;top:185.5px" width="8" height="7"><path d="M1 1L6.5 6M6.5 1L1 6" stroke="#000" stroke-width="1"/></svg>
<div class="t" style="left:98px;top:202px;font-size:7px;">Spacing</div>
<div class="a" style="left:125px;top:198px;width:83px;height:14px;background:#fff;border-top:1px solid #202020;border-left:1px solid #202020;border-right:1px solid #e8e8e8;border-bottom:1px solid #e8e8e8"></div>
<div class="t" style="left:127px;top:202px;font-size:7px;">2,2,2</div>
<div class="t" style="left:104px;top:218px;font-size:7px;">Interpolation</div>
<svg class="a" style="left:146px;top:217px" width="9" height="9" viewBox="0 0 9 9"><circle cx="4.4" cy="4.2" r="3.6" fill="#e6e6e6"/><path d="M1.9 6.7A3.5 3.5 0 0 1 6.9 1.7" fill="none" stroke="#404040" stroke-width="1.3"/><circle cx="4.3" cy="4.1" r="1.3" fill="#000"/></svg>
<div class="t" style="left:158.5px;top:218px;font-size:7px;">linear</div>
<svg class="a" style="left:180.5px;top:217px" width="9" height="9" viewBox="0 0 9 9"><circle cx="4.4" cy="4.2" r="3.6" fill="#e0e0e0"/><path d="M1.9 6.7A3.5 3.5 0 0 1 6.9 1.7" fill="none" stroke="#505050" stroke-width="1.3"/></svg>
<div class="t" style="left:192.5px;top:218px;font-size:7px;">sinc</div>
<div class="a" style="left:9.5px;top:241.5px;width:202px;height:54px;border:1.3px solid #bcbcbc"></div>
<div class="t" style="left:13px;top:237px;font-size:7px;background:#fff;padding:0 2px">IO</div>
<div class="a" style="left:199.8px;top:239.5px;width:9.199999999999989px;height:4px;background:#fff"></div>
<svg class="a" style="left:200.8px;top:238.0px" width="8" height="7"><path d="M1 1L6.5 6M6.5 1L1 6" stroke="#000" stroke-width="1"/></svg>
<div class="t" style="left:98.5px;top:255px;font-size:7px;">input Volume</div>
<div class="a" style="left:141.5px;top:251.5px;width:57px;height:16px;border:1.4px solid #c8c8c8;background:#fff"></div>
<div class="ind" style="left:183.5px;top:258.3px"></div>
<div class="t" style="left:146.5px;top:256px;font-size:7px;">fixed.nrrd</div>
<svg class="a" style="left:199px;top:251.5px" width="7.5" height="16" viewBox="0 0 7.5 16"><rect x="0.7" y="0.7" width="6.1" height="14.6" fill="#fff" stroke="#c4c4c4" stroke-width="1.4"/><rect x="0" y="7.2" width="7.5" height="1.6" fill="#c4c4c4"/><path d="M1.15 5.0L6.35 5.0L3.75 2.4000000000000004Z" fill="#000"/><path d="M1.15 11.0L6.35 11.0L3.75 13.6Z" fill="#000"/></svg>
<div class="t" style="left:96.5px;top:277px;font-size:7px;">Output Volume</div>
<div class="a" style="left:144.5px;top:274px;width:54px;height:16px;border:1.4px solid #c8c8c8;background:#fff"></div>
<div class="ind" style="left:183.5px;top:280.8px"></div>
<div class="t" style="left:149px;top:279px;font-size:7px;">Volume0</div>
<svg class="a" style="left:199px;top:274px" width="7.5" height="16" viewBox="0 0 7.5 16"><rect x="0.7" y="0.7" width="6.1" height="14.6" fill="#fff" stroke="#c4c4c4" stroke-width="1.4"/><rect x="0" y="7.2" width="7.5" height="1.6" fill="#c4c4c4"/><path d="M1.15 5.0L6.35 5.0L3.75 2.4000000000000004Z" fill="#000"/><path d="M1.15 11.0L6.35 11.0L3.75 13.6Z" fill="#000"/></svg>
<div class="a" style="left:21px;top:304px;width:36px;height:14.5px;border:1px solid #b8b8b8;background:#fff"></div>
<div class="t" style="left:21px;top:308px;width:36px;text-align:center;font-size:7px;">Default</div>
<div class="a" style="left:163px;top:304px;width:37px;height:14.5px;border:1px solid #b8b8b8;background:#fff"></div>
<div class="t" style="left:163px;top:308px;width:37px;text-align:center;font-size:7px;">Apply</div>
<div class="a" style="left:5px;top:415.5px;width:68px;height:14.5px;border:1px solid #b8b8b8;background:#fff"></div>
<div class="t" style="left:5px;top:419px;width:68px;text-align:center;font-size:7px;">Toggle FG/BG</div>
<div class="a" style="left:5px;top:432.5px;width:68px;height:14.5px;border:1px solid #b8b8b8;background:#fff"></div>
<div class="t" style="left:5px;top:436px;width:68px;text-align:center;font-size:7px;">Toggle Annotation</div>
<div class="t" style="left:86.5px;top:419px;font-size:7px;">Fade (FG/BG):</div>
<div class="a" style="left:136px;top:417px;width:78px;height:11.5px;background:#d4d4d4;border-top:1px solid #303030;border-left:1px solid #303030"></div>
<div class="a" style="left:175.5px;top:418px;width:19.5px;height:10.5px;background:#fff;border-right:1px solid #000;border-bottom:1px solid #000"></div>
<div class="a" style="left:184.5px;top:418px;width:1px;height:9.5px;background:#000"></div>
<div class="t" style="left:89px;top:434px;font-size:7px;">Opacity (0,1):</div>
<div class="a" style="left:136px;top:432.5px;width:78px;height:11.5px;background:#d4d4d4;border-top:1px solid #303030;border-left:1px solid #303030"></div>
<div class="a" style="left:137px;top:433.5px;width:20px;height:10.5px;background:#fff;border-right:1px solid #000;border-bottom:1px solid #000"></div>
<div class="a" style="left:147px;top:433.5px;width:1px;height:9.5px;background:#000"></div>
<div class="a" style="left:10.5px;top:470px;width:8px;height:8px;background:#d6d6d6;border-top:1.3px solid #383838;border-left:1.3px solid #383838;border-right:1px solid #eeeeee;border-bottom:1px solid #eeeeee"></div>
<div class="t" style="left:22.5px;top:471px;font-size:7px;">Spin</div>
<div class="a" style="left:44.5px;top:467px;width:46px;height:14.5px;border:1px solid #b8b8b8;background:#fff"></div>
<div class="t" style="left:44.5px;top:471px;width:46px;text-align:center;font-size:7px;">Center</div>
<div class="a" style="left:10.5px;top:489px;width:8px;height:8px;background:#d6d6d6;border-top:1.3px solid #383838;border-left:1.3px solid #383838;border-right:1px solid #eeeeee;border-bottom:1px solid #eeeeee"></div>
<div class="t" style="left:22.5px;top:490px;font-size:7px;">Rock</div>
<div class="a" style="left:44.5px;top:484.5px;width:46px;height:16.5px;border:1.4px solid #c8c8c8;background:#fff"></div>
<div class="ind" style="left:76.5px;top:491.55px"></div>
<div class="t" style="left:49.5px;top:490px;font-size:7px;">Select</div>
<div class="a" style="left:10.5px;top:507.8px;width:8px;height:8px;background:#d6d6d6;border-top:1.3px solid #383838;border-left:1.3px solid #383838;border-right:1px solid #eeeeee;border-bottom:1px solid #eeeeee"></div>
<div class="t" style="left:22.5px;top:508px;font-size:7px;">Ortho</div>
<div class="t" style="left:47px;top:508px;font-size:7px;">FOV:</div>
<div class="a" style="left:67px;top:505px;width:24px;height:12.5px;background:#fff;border-top:1px solid #202020;border-left:1px solid #202020;border-right:1px solid #e8e8e8;border-bottom:1px solid #e8e8e8"></div>
<svg class="a" style="left:10.3px;top:521px" width="37" height="37" viewBox="0 0 37 37">
<rect x="0.5" y="0.5" width="36" height="36" fill="#fff" stroke="#a8a494" stroke-width="1"/>
<path d="M18 5V32" stroke="#bdb9a8" stroke-width="1.2"/><path d="M8 19H30" stroke="#d4d0c4" stroke-width="1.4"/>
<path d="M10.5 11L27 27" stroke="#707070" stroke-width="0.7"/>
<g font-family="Liberation Sans" font-size="6" fill="#000">
<text x="6.6" y="11">P</text><text x="20" y="9.8">S</text><text x="3.6" y="23.2">R</text><text x="31.3" y="19.8">L</text><text x="15" y="32.2">I</text><text x="26.2" y="30.8">A</text></g><path d="M15.6 17.6 A2.9 2.9 0 0 1 20.2 16.6" fill="none" stroke="#000" stroke-width="1.3"/><path d="M20.8 20.4 A2.9 2.9 0 0 1 16.2 21.4" fill="none" stroke="#000" stroke-width="1.3"/><path d="M13.8 19L16.6 16.6L17 19.8Z M22.6 19L19.8 21.4L19.4 18.2Z" fill="#000"/></svg>
<svg class="a" style="left:50px;top:521px" width="37" height="37" viewBox="0 0 37 37">
<rect x="0.5" y="0.5" width="36" height="36" fill="#fff" stroke="#a8a494" stroke-width="1"/>
<path d="M18 5V32" stroke="#bdb9a8" stroke-width="1.2"/><path d="M8 19H30" stroke="#d4d0c4" stroke-width="1.4"/>
<path d="M10.5 11L27 27" stroke="#707070" stroke-width="0.7"/>
<g font-family="Liberation Sans" font-size="6" fill="#000">
<text x="6.6" y="11">P</text><text x="20" y="9.8">S</text><text x="3.6" y="23.2">R</text><text x="31.3" y="19.8">L</text><text x="15" y="32.2">I</text><text x="26.2" y="30.8">A</text></g><rect x="17" y="18" width="2" height="2" fill="#000"/></svg>
<div class="a" style="left:96px;top:465px;width:116px;height:92px;background:#b3b3e6"></div>
<div class="t" style="left:124px;top:508px;font-size:7px;color:#222">3DNav / SliceZoom</div>
<div class="a" style="left:100px;top:560.5px;width:8px;height:7.5px;border:1px solid #404040;background:#fff"></div>
<div class="a" style="left:102px;top:564px;width:4px;height:1px;background:#000"></div>
<div class="a" style="left:113px;top:558px;width:82px;height:11.5px;background:#d4d4d4;border-top:1px solid #303030;border-left:1px solid #303030"></div>
<div class="a" style="left:113.5px;top:559px;width:20px;height:10.5px;background:#fff;border-right:1px solid #000;border-bottom:1px solid #000"></div>
<div class="a" style="left:123.5px;top:559px;width:1px;height:9.5px;background:#000"></div>
<div class="a" style="left:200px;top:560.5px;width:8px;height:7.5px;border:1px solid #404040;background:#fff"></div>
<div class="a" style="left:202px;top:564px;width:4px;height:1px;background:#000"></div>
<div class="a" style="left:203.5px;top:562px;width:1px;height:4px;background:#000"></div>
<div class="t" style="left:6.5px;top:586px;font-size:7px;">Volume0</div>
<div class="a" style="left:661px;top:582.5px;width:102.5px;height:13.5px;border-top:1px solid #505050;border-left:1px solid #505050;border-right:1px solid #e4e4e4;border-bottom:1px solid #e4e4e4"></div>
<div class="a" style="left:763.5px;top:582.5px;width:15px;height:13.5px;border-top:1px solid #505050;border-left:1px solid #505050;border-right:1px solid #e4e4e4;border-bottom:1px solid #e4e4e4"></div>
</body></html>
